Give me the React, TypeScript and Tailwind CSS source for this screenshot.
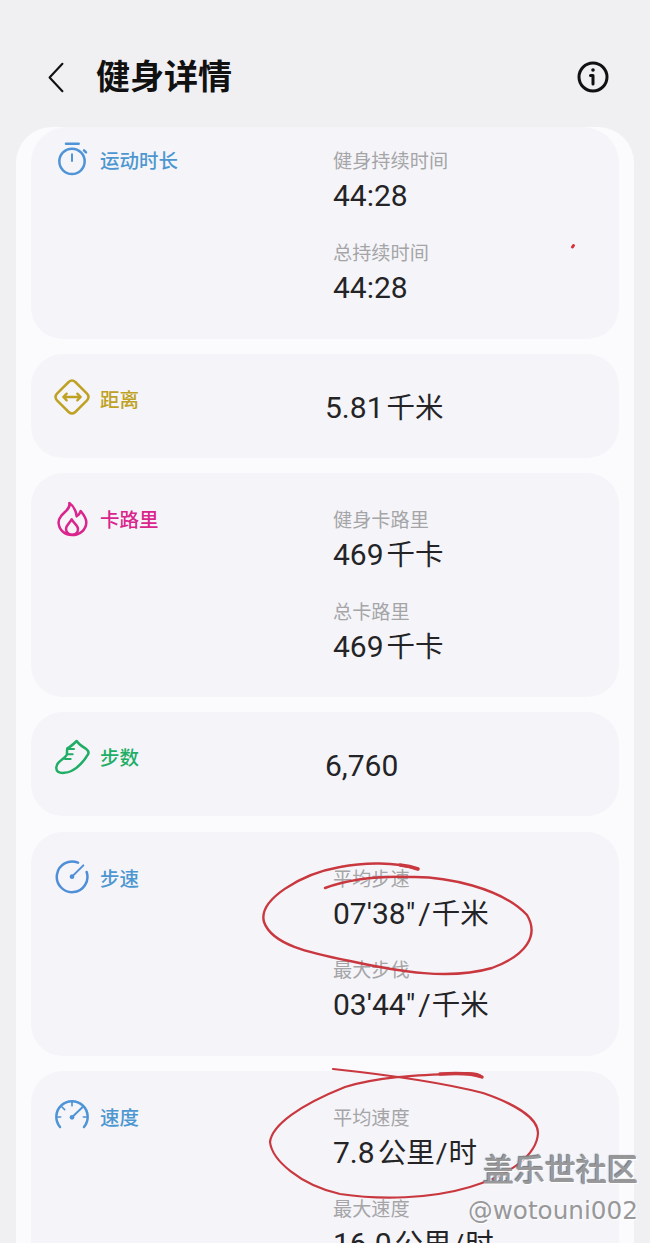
import type { ReactNode } from "react";

const fontStack = "font-['Roboto','Noto_Sans_CJK_SC',sans-serif]";

const Icon = ({ children, className }: { children: ReactNode; className: string }) => (
    <svg viewBox="0 0 108 108" fill="none" stroke="currentColor" strokeWidth="7.5" strokeLinecap="round" strokeLinejoin="round" className={`w-9 h-9 shrink-0 -mt-1 ${className}`}>
        {children}
    </svg>
);

const TimerIcon = () => <Icon className="text-[#4f94d6]">
    <circle cx="54" cy="58" r="38" />
    <path d="M36 5H74" />
    <path d="M54 37V57" strokeWidth="6" />
    <path d="M90 25L96 31" />
</Icon>;

const DistanceIcon = () => <Icon className="text-[#bfa124] -translate-y-[2px]">
    <path d="M44 9Q54 0 64 9L99 44Q108 54 99 64L64 99Q54 108 44 99L9 64Q0 54 9 44Z" />
    <path d="M28 54H80M38 44L28 54L38 64M70 44L80 54L70 64" strokeWidth="7" />
</Icon>;

const FlameIcon = () => <Icon className="text-[#d9258c]">
    <path d="M46 6C50 22 34 30 22 44C14 54 13 62 14 68C17 90 34 102 54 102C76 102 96 88 97 64C97 50 88 40 80 30C78 38 74 42 68 46C66 30 58 14 46 6Z" />
    <path d="M53 55C48 66 36 72 36 84C36 95 46 101 54 101C64 101 72 94 72 84C72 72 58 66 53 55Z" />
</Icon>;

const ShoeIcon = () => <Icon className="text-[#21ad66]">
    <path d="M40 28C48 24 58 16 68 6C74 16 84 22 94 28C102 34 106 40 102 46C90 66 72 86 52 96C40 102 20 104 12 98C4 92 6 78 14 70C24 60 34 56 38 48C40 42 38 34 40 28Z" />
    <path d="M40 30H60M39 46H56M33 60H50" strokeWidth="6" />
</Icon>;

const PaceIcon = () => <Icon className="text-[#4f8fd8]">
    <path d="M72 8A46 46 0 1 0 98 36" />
    <path d="M54 50L88 16" strokeWidth="6" />
    <circle cx="54" cy="50" r="7" fill="currentColor" stroke="none" />
</Icon>;

const SpeedIcon = () => <Icon className="text-[#4f94d6]">
    <path d="M18 84A47 47 0 1 1 90 84" />
    <path d="M54 55L86 24" strokeWidth="6" />
    <circle cx="54" cy="55" r="7" fill="currentColor" stroke="none" />
    <path d="M54 8V20M24 24L32 32M8 54H20M88 54H100" strokeWidth="5" />
</Icon>;

const Unit = ({ children, className }: { children: ReactNode; className?: string }) => (
    <span className={`text-[28.5px] ${className ?? ""}`}>{children}</span>
);

const Stat = ({ label, children }: { label: string; children: ReactNode }) => <div>
    <div className="h-[23px] text-[19.2px] leading-6 text-[#a5a5a8]">{label}</div>
    <div className="h-[46px] text-[30px] leading-[46px] text-[#242427]">{children}</div>
</div>;

const Card = ({ icon, title, titleClass, className, children }: { icon: ReactNode; title: string; titleClass: string; className: string; children: ReactNode }) => (
    <div className={`flex bg-[#f5f5f9] rounded-[32px] ${className}`}>
        <div className="flex items-center gap-[10px] w-[302px] h-6 pl-[23px] shrink-0">
            {icon}
            <span className={`text-[19.5px] font-medium leading-6 ${titleClass}`}>{title}</span>
        </div>
        <div className="flex flex-col gap-[22.5px]">{children}</div>
    </div>
);

const Single = ({ children }: { children: ReactNode }) => (
    <div className="h-[46px] -mt-1 -ml-[8px] text-[30px] leading-[46px] text-[#242427]">{children}</div>
);

const App = () => {
    return <div className={`relative w-[650px] h-[1243px] overflow-hidden bg-[#f0f0f3] ${fontStack}`}>
        <div className="flex items-center justify-between h-[127px] pl-[45px] pr-[40px] pt-[27px]">
            <div className="flex items-center gap-[29px]">
                <svg viewBox="0 0 24 36" fill="none" stroke="#111" strokeWidth="2.3" strokeLinecap="round" strokeLinejoin="round" className="w-[22px] h-[33px]">
                    <path d="M19 3L5 18L19 33" />
                </svg>
                <h1 className="text-[34px] font-bold leading-10 text-[#111]">健身详情</h1>
            </div>
            <svg viewBox="0 0 34 34" fill="none" stroke="#111" strokeWidth="3" strokeLinecap="round" className="w-[34px] h-[34px]">
                <circle cx="17" cy="17" r="14" />
                <path d="M17 15.5V24M14.5 15.5H17" />
                <circle cx="17" cy="10" r="1.8" fill="#111" stroke="none" />
            </svg>
        </div>

        <div className="flex flex-col gap-[15.25px] mx-4 px-[15px] pb-8 bg-[#fbfbfe] rounded-[36px]">
            <Card icon={<TimerIcon />} title="运动时长" titleClass="text-[#4d97d1]" className="pt-[23px] pb-[28.1px] rounded-t-[36px]">
                <Stat label="健身持续时间">44:28</Stat>
                <Stat label="总持续时间">44:28</Stat>
            </Card>
            <Card icon={<DistanceIcon />} title="距离" titleClass="text-[#bfa124]" className="h-[104px] pt-[35px]">
                <Single>5.81<Unit className="ml-[3px]">千米</Unit></Single>
            </Card>
            <Card icon={<FlameIcon />} title="卡路里" titleClass="text-[#d9258c]" className="pt-[36px] pb-[27.5px]">
                <Stat label="健身卡路里">469<Unit className="ml-[3px]">千卡</Unit></Stat>
                <Stat label="总卡路里">469<Unit className="ml-[3px]">千卡</Unit></Stat>
            </Card>
            <Card icon={<ShoeIcon />} title="步数" titleClass="text-[#21ad66]" className="h-[104px] pt-[35px]">
                <Single>6,760</Single>
            </Card>
            <Card icon={<PaceIcon />} title="步速" titleClass="text-[#4d97d1]" className="pt-[36px] pb-[27.5px]">
                <Stat label="平均步速">{`07'38"`}<span className="ml-[3px]">/</span><Unit className="ml-[1px]">千米</Unit></Stat>
                <Stat label="最大步伐">{`03'44"`}<span className="ml-[3px]">/</span><Unit className="ml-[1px]">千米</Unit></Stat>
            </Card>
            <Card icon={<SpeedIcon />} title="速度" titleClass="text-[#4d97d1]" className="pt-[36px] pb-[27.5px]">
                <Stat label="平均速度">7.8<Unit className="ml-[3px]">公里<span className="mx-[1px]">/</span>时</Unit></Stat>
                <Stat label="最大速度">16.0<Unit className="ml-[3px]">公里<span className="mx-[1px]">/</span>时</Unit></Stat>
            </Card>
        </div>

        {/* hand drawn marks on top of the screenshot */}
        <svg viewBox="0 0 650 1243" fill="none" stroke="#c9373f" strokeLinecap="round" className="absolute inset-0 w-[650px] h-[1243px] pointer-events-none">
            <path strokeWidth="2.4" d="M325 888C350 879 380 876 410 877C445 876 502 888 527 915C539 935 527 955 492 968C450 980 400 972 350 961C310 953 272 945 264 922C258 900 300 874 340 867C365 862 395 862 418 869" />
            <path strokeWidth="3.5" d="M400 865Q410 866 418 869" />
            <path strokeWidth="2.2" d="M333 1069C380 1074 440 1082 483 1093C515 1104 538 1118 538 1133C537 1155 510 1175 470 1187C430 1199 380 1200 340 1194C300 1185 272 1160 270 1142C272 1125 300 1105 345 1087C385 1075 430 1075 467 1073C474 1073 480 1074 482 1077" />
            <path strokeWidth="3.5" d="M440 1074Q470 1072 482 1077" />
            <path strokeWidth="3" stroke="#d8303a" d="M573.5 245.5L572.5 247" />
        </svg>

        <div className="absolute right-[12px] top-[1152px] flex flex-col items-end text-[#98989a]">
            <div className="text-[31px] font-medium leading-[38px] [text-shadow:1px_1px_1px_#fff,-1px_-1px_1px_#777]">盖乐世社区</div>
            <div className="mt-[5px] text-[24.7px] leading-[32px] font-['DejaVu_Sans',sans-serif] [text-shadow:1px_1px_1px_#fff]">@wotouni002</div>
        </div>
    </div>
}

export default App;
